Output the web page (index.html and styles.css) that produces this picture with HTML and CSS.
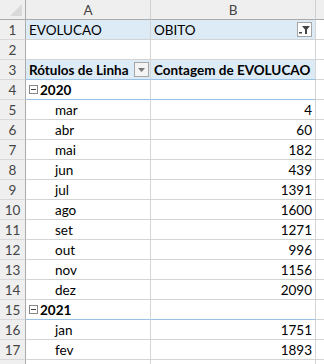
FILE: index.html
```html
<!DOCTYPE html>
<html>
<head>
<meta charset="utf-8">
<link rel="stylesheet" href="styles.css">
</head>
<body>
<div class="sheet">
  <div class="corner"><span class="tri"></span></div>
  <div class="colhead">A</div>
  <div class="colhead">B</div>
  <div class="colhead end"></div>

  <div class="rn">1</div>
  <div class="c blue">EVOLUCAO</div>
  <div class="c blue filtercell">OBITO<span class="btn filter"><svg width="11" height="9" viewBox="0 0 11 9"><path d="M3 1h8L8 4.5V9H6V4.5z" fill="#444"/><rect x="0" y="7" width="3" height="1.5" fill="#444"/></svg></span></div>
  <div class="c x"></div>

  <div class="rn">2</div>
  <div class="c"></div>
  <div class="c"></div>
  <div class="c x"></div>

  <div class="rn">3</div>
  <div class="c blue hdr b">Rótulos de Linha<span class="btn dd"><svg width="7" height="4" viewBox="0 0 7 4"><path d="M0 0h7L3.5 4z" fill="#777"/></svg></span></div>
  <div class="c blue hdr b">Contagem de EVOLUCAO</div>
  <div class="c x"></div>

  <div class="rn">4</div>
  <div class="c grp b"><span class="minus"></span>2020</div>
  <div class="c grp"></div>
  <div class="c x"></div>

  <div class="rn">5</div><div class="c m">mar</div><div class="c n">4</div><div class="c x"></div>
  <div class="rn">6</div><div class="c m">abr</div><div class="c n">60</div><div class="c x"></div>
  <div class="rn">7</div><div class="c m">mai</div><div class="c n">182</div><div class="c x"></div>
  <div class="rn">8</div><div class="c m">jun</div><div class="c n">439</div><div class="c x"></div>
  <div class="rn">9</div><div class="c m">jul</div><div class="c n">1391</div><div class="c x"></div>
  <div class="rn">10</div><div class="c m">ago</div><div class="c n">1600</div><div class="c x"></div>
  <div class="rn">11</div><div class="c m">set</div><div class="c n">1271</div><div class="c x"></div>
  <div class="rn">12</div><div class="c m">out</div><div class="c n">996</div><div class="c x"></div>
  <div class="rn">13</div><div class="c m">nov</div><div class="c n">1156</div><div class="c x"></div>
  <div class="rn">14</div><div class="c m">dez</div><div class="c n">2090</div><div class="c x"></div>

  <div class="rn">15</div>
  <div class="c grp b"><span class="minus"></span>2021</div>
  <div class="c grp"></div>
  <div class="c x"></div>

  <div class="rn">16</div><div class="c m">jan</div><div class="c n">1751</div><div class="c x"></div>
  <div class="rn">17</div><div class="c m">fev</div><div class="c n">1893</div><div class="c x"></div>
  <div class="rn"></div><div class="c m"></div><div class="c n"></div><div class="c x"></div>
</div>
</body>
</html>
```
FILE: styles.css
```css
html, body {
  margin: 0;
  padding: 0;
  background: #fff;
  overflow: hidden;
}
.sheet {
  display: grid;
  grid-template-columns: 26px 125px 165px 20px;
  grid-auto-rows: 20px;
  font-family: Lato, "Open Sans", "Liberation Sans", sans-serif;
  font-size: 13.5px;
  color: #000;
  width: 324px;
}
.sheet > div {
  box-sizing: border-box;
  border-right: 1px solid #d4d4d4;
  border-bottom: 1px solid #d4d4d4;
  display: flex;
  align-items: center;
  white-space: nowrap;
  overflow: hidden;
}
.corner {
  background: #efefef;
  position: relative;
  border-bottom-color: #ababab !important;
  border-right-color: #ababab !important;
}
.tri {
  position: absolute;
  right: 3px;
  bottom: 3px;
  width: 0;
  height: 0;
  border-left: 12px solid transparent;
  border-bottom: 12px solid #d9d9d9;
}
.colhead {
  background: #efefef;
  justify-content: center;
  color: #444;
  border-bottom-color: #ababab !important;
  border-right-color: #d0d0d0 !important;
}
.colhead.end {
  border-right: none !important;
}
.rn {
  background: #efefef;
  justify-content: center;
  color: #444;
  border-right-color: #ababab !important;
  border-bottom-color: #d8d8d8 !important;
}
.c {
  padding-left: 3px;
}
.c.x {
  border-right: none !important;
}
.blue {
  background: #ddebf7;
}
.b {
  font-weight: 700;
}
.hdr {
  position: relative;
  border-bottom: 1px solid #9bc2e6 !important;
}
.grp {
  border-bottom: 1px solid #9bc2e6 !important;
}
.m {
  padding-left: 29px;
}
.n {
  justify-content: flex-end;
  padding-right: 3px;
}
.filtercell {
  position: relative;
}
.btn {
  position: absolute;
  box-sizing: border-box;
  width: 15px;
  height: 15px;
  border: 1px solid #a6a6a6;
  background: #fff;
  display: flex;
  align-items: center;
  justify-content: center;
}
.filter {
  right: 3px;
  top: 2px;
}
.dd {
  right: 1px;
  top: 2px;
  background: #f4f4f4;
}
.minus {
  box-sizing: border-box;
  width: 9px;
  height: 9px;
  border: 1px solid #888;
  margin-right: 2px;
  position: relative;
  background: #fff;
}
.minus::after {
  content: "";
  position: absolute;
  left: 1px;
  right: 1px;
  top: 3px;
  height: 1px;
  background: #444;
}
```
